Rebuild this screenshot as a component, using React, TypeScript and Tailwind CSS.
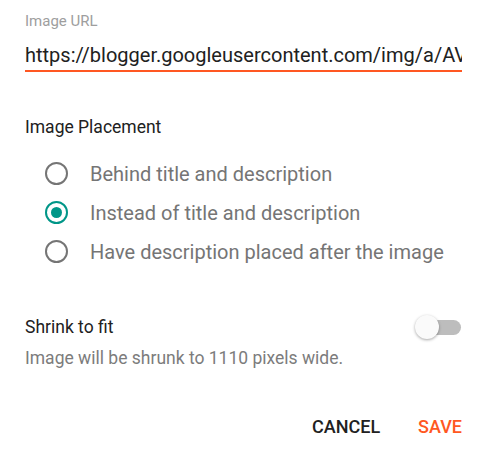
import React, { useState } from 'react';

const options = [
  'Behind title and description',
  'Instead of title and description',
  'Have description placed after the image',
];

const Radio: React.FC<{ checked: boolean }> = ({ checked }) => (
  <span
    className={`flex h-[23px] w-[23px] items-center justify-center rounded-full border-2 ${
      checked ? 'border-[#009688]' : 'border-[#757575]'
    }`}
  >
    {checked && <span className="h-[11px] w-[11px] rounded-full bg-[#009688]" />}
  </span>
);

const App: React.FC = () => {
  const [placement, setPlacement] = useState(1);

  return (
    <div className="h-[460px] w-[492px] bg-white pl-[25px] pr-[30px] pt-[12px] font-['Roboto',sans-serif]">
      <div className="text-[15px] leading-[18px] text-[#9e9e9e]">Image URL</div>
      <div className="mt-[13px] overflow-hidden whitespace-nowrap border-b-2 border-[#ff5722] pb-[3px] text-[20px] leading-6 text-[#212121]">
        https://blogger.googleusercontent.com/img/a/AVvXsEg
      </div>

      <div className="mt-[45px] text-[17.5px] leading-5 text-[#212121]">Image Placement</div>
      <div className="mt-[17px] pl-[20px]">
        {options.map((label, i) => (
          <div
            key={label}
            onClick={() => setPlacement(i)}
            className="flex h-[39px] cursor-pointer items-center gap-[22px]"
          >
            <Radio checked={placement === i} />
            <span className="text-[20px] leading-6 text-[#757575]">{label}</span>
          </div>
        ))}
      </div>

      <div className="mt-[46px] flex h-5 items-center justify-between">
        <span className="text-[17.5px] leading-5 text-[#212121]">Shrink to fit</span>
        <div className="relative mr-[1px] h-[15px] w-[36px] rounded-full bg-[#bdbdbd]">
          <span className="absolute left-[-10px] top-[-5px] h-[24px] w-[24px] rounded-full bg-[#fafafa] shadow-[0_1px_3px_rgba(0,0,0,0.35)]" />
        </div>
      </div>
      <div className="mt-[11px] text-[17.5px] leading-5 text-[#7c7c7c]">
        Image will be shrunk to 1110 pixels wide.
      </div>

      <div className="mt-[49px] flex justify-end gap-[38px] text-[18px] font-medium leading-5">
        <button className="text-[#212121]">CANCEL</button>
        <button className="text-[#ff5722]">SAVE</button>
      </div>
    </div>
  );
};

export default App;
